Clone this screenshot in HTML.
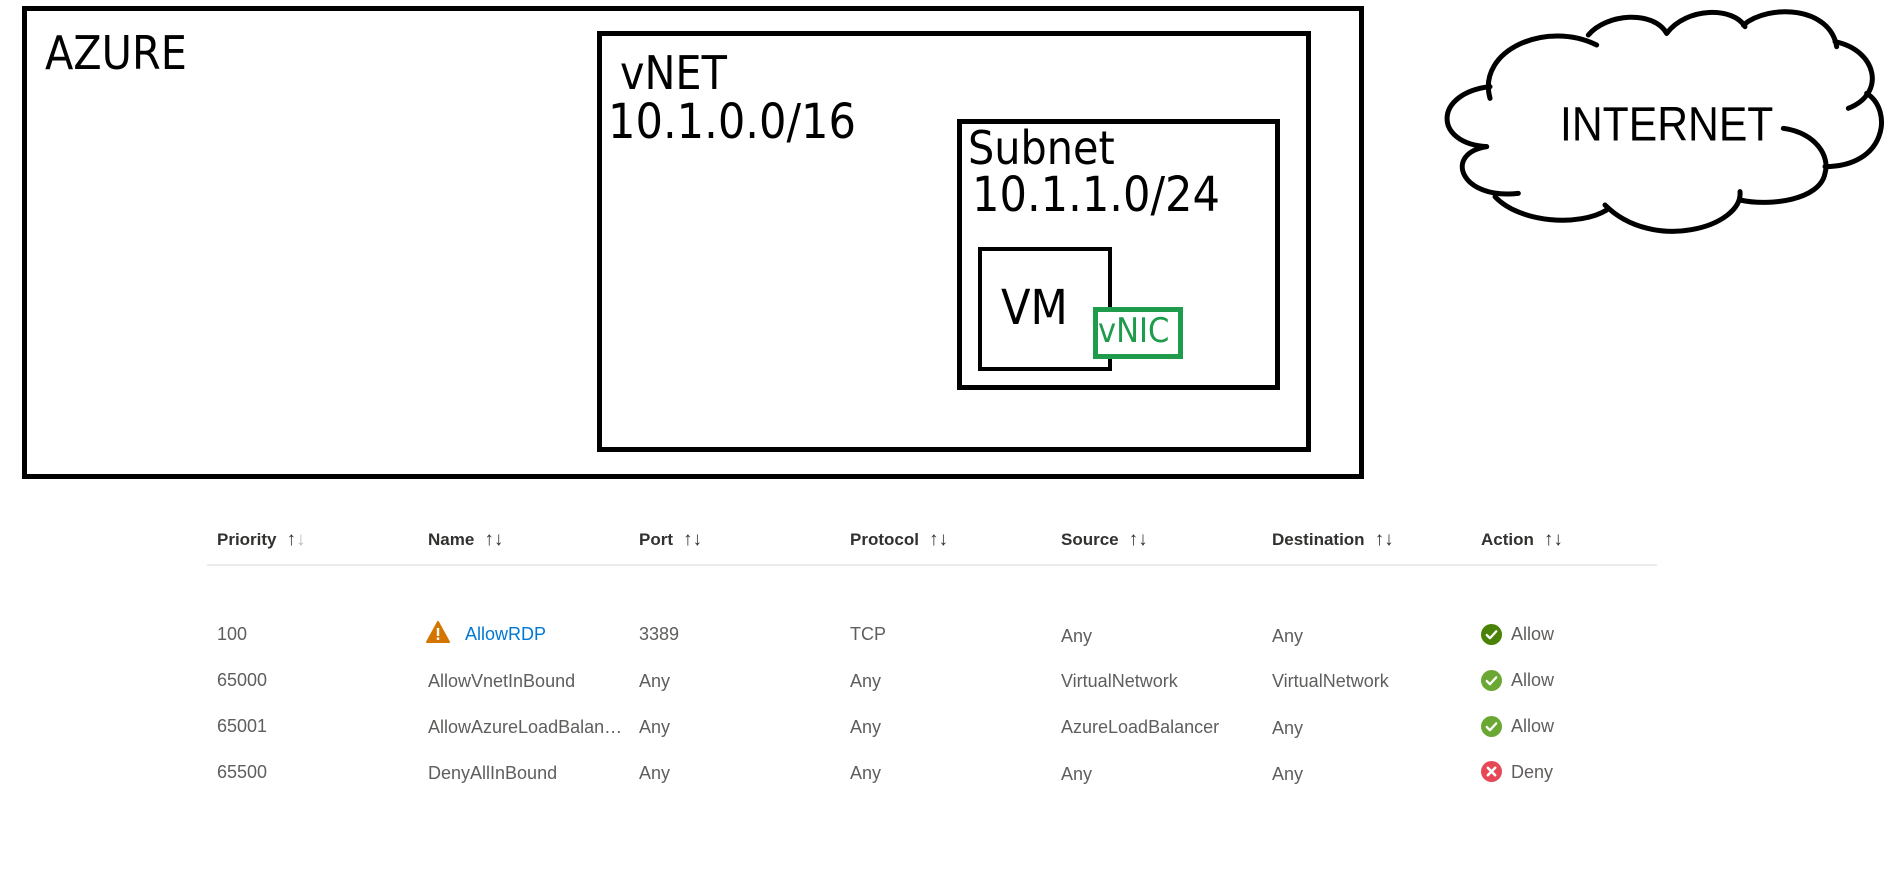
<!DOCTYPE html>
<html><head><meta charset="utf-8"><style>
*{margin:0;padding:0;box-sizing:border-box}
body{width:1890px;height:891px;background:#fff;position:relative;overflow:hidden;font-family:"Liberation Sans",sans-serif}
.b{position:absolute;border:5px solid #000}
.t{position:absolute;color:#000;white-space:nowrap;line-height:1;font-family:"DejaVu Sans Condensed","Liberation Sans",sans-serif}
.h{position:absolute;top:529px;font-size:17px;font-weight:bold;color:#323130;white-space:nowrap}
.h span{font-weight:normal;margin-left:10px;font-size:19px}
.c{position:absolute;font-size:18px;color:#605e5c;white-space:nowrap}
</style></head><body>
<div class="b" style="left:22px;top:6px;width:1342px;height:473px"></div>
<div class="t" style="left:45px;top:30px;font-size:46px">AZURE</div>
<div class="b" style="left:597px;top:31px;width:714px;height:421px"></div>
<div class="t" style="left:620px;top:50px;font-size:46px">vNET</div>
<div class="t" style="left:608px;top:98px;font-size:48px">10.1.0.0/16</div>
<div class="b" style="left:957px;top:119px;width:323px;height:271px"></div>
<div class="t" style="left:968px;top:125px;font-size:46px">Subnet</div>
<div class="t" style="left:972px;top:171px;font-size:48px">10.1.1.0/24</div>
<div class="b" style="left:978px;top:247px;width:134px;height:124px;border-width:4px"></div>
<div class="t" style="left:1001px;top:284px;font-size:48px">VM</div>
<div style="position:absolute;left:1093px;top:307px;width:90px;height:52px;border:5px solid #1e9b4b;background:#fff"></div>
<div class="t" style="left:1098px;top:314px;font-size:34px;color:#1e9b4b">vNIC</div>
<svg style="position:absolute;left:1420px;top:0" width="470" height="340" viewBox="0 0 1410 1020">
<g fill="none" stroke="#000" stroke-width="15" stroke-linecap="round">
<path d="M210,295 C170,150 380,60 530,135"/>
<path d="M505,105 C560,40 700,30 740,100"/>
<path d="M740,100 C800,20 940,20 975,80"/>
<path d="M970,75 C1050,10 1230,20 1250,140"/>
<path d="M1245,125 C1370,150 1400,280 1285,325"/>
<path d="M1340,280 C1420,330 1400,500 1215,500"/>
<path d="M1090,385 C1190,400 1230,470 1215,520 C1200,600 1050,620 960,600"/>
<path d="M960,575 C970,680 700,760 555,615"/>
<path d="M560,630 C480,680 300,670 225,590"/>
<path d="M295,580 C120,600 70,460 200,440"/>
<path d="M200,440 C40,430 40,280 210,260"/>
</g>
<text x="420" y="422" font-family="Liberation Sans,sans-serif" font-size="146" textLength="640" lengthAdjust="spacingAndGlyphs" fill="#000">INTERNET</text>
</svg>
<div class="h" style="left:217px">Priority<span>↑<span style="color:#bbb;margin:0">↓</span></span></div>
<div class="h" style="left:428px">Name<span>↑↓</span></div>
<div class="h" style="left:639px">Port<span>↑↓</span></div>
<div class="h" style="left:850px">Protocol<span>↑↓</span></div>
<div class="h" style="left:1061px">Source<span>↑↓</span></div>
<div class="h" style="left:1272px">Destination<span>↑↓</span></div>
<div class="h" style="left:1481px">Action<span>↑↓</span></div>
<div style="position:absolute;left:207px;top:564px;width:1450px;height:2px;background:#edebe9"></div>

<div class="c" style="left:217px;top:624px">100</div>
<svg style="position:absolute;left:426px;top:621px" width="24" height="22" viewBox="0 0 24 22"><path d="M12 1 L23 21 L1 21 Z" fill="#d47500" stroke="#d47500" stroke-linejoin="round" stroke-width="2"/><rect x="10.8" y="7" width="2.4" height="8" fill="#fff"/><rect x="10.8" y="16.5" width="2.4" height="2.4" fill="#fff"/></svg>
<div class="c" style="left:465px;top:624px;color:#0078d4">AllowRDP</div>
<div class="c" style="left:639px;top:624px">3389</div>
<div class="c" style="left:850px;top:624px">TCP</div>
<div class="c" style="left:1061px;top:626px">Any</div>
<div class="c" style="left:1272px;top:626px">Any</div>

<div class="c" style="left:217px;top:670px">65000</div>
<div class="c" style="left:428px;top:671px">AllowVnetInBound</div>
<div class="c" style="left:639px;top:671px">Any</div>
<div class="c" style="left:850px;top:671px">Any</div>
<div class="c" style="left:1061px;top:671px">VirtualNetwork</div>
<div class="c" style="left:1272px;top:671px">VirtualNetwork</div>

<div class="c" style="left:217px;top:716px">65001</div>
<div class="c" style="left:428px;top:717px;width:192px;overflow:hidden">AllowAzureLoadBalan…</div>
<div class="c" style="left:639px;top:717px">Any</div>
<div class="c" style="left:850px;top:717px">Any</div>
<div class="c" style="left:1061px;top:717px">AzureLoadBalancer</div>
<div class="c" style="left:1272px;top:718px">Any</div>

<div class="c" style="left:217px;top:762px">65500</div>
<div class="c" style="left:428px;top:763px">DenyAllInBound</div>
<div class="c" style="left:639px;top:763px">Any</div>
<div class="c" style="left:850px;top:763px">Any</div>
<div class="c" style="left:1061px;top:764px">Any</div>
<div class="c" style="left:1272px;top:764px">Any</div>

<svg style="position:absolute;left:1481px;top:624px" width="21" height="21" viewBox="0 0 20 20"><circle cx="10" cy="10" r="10" fill="#498205"/><path d="M5.5 10.5 L8.5 13.5 L14.5 7" stroke="#fff" stroke-width="2.2" fill="none" stroke-linecap="round" stroke-linejoin="round"/></svg>
<div class="c" style="left:1511px;top:624px">Allow</div>
<svg style="position:absolute;left:1481px;top:670px" width="21" height="21" viewBox="0 0 20 20"><circle cx="10" cy="10" r="10" fill="#6ba833"/><path d="M5.5 10.5 L8.5 13.5 L14.5 7" stroke="#fff" stroke-width="2.2" fill="none" stroke-linecap="round" stroke-linejoin="round"/></svg>
<div class="c" style="left:1511px;top:670px">Allow</div>
<svg style="position:absolute;left:1481px;top:716px" width="21" height="21" viewBox="0 0 20 20"><circle cx="10" cy="10" r="10" fill="#6ba833"/><path d="M5.5 10.5 L8.5 13.5 L14.5 7" stroke="#fff" stroke-width="2.2" fill="none" stroke-linecap="round" stroke-linejoin="round"/></svg>
<div class="c" style="left:1511px;top:716px">Allow</div>
<svg style="position:absolute;left:1481px;top:761px" width="21" height="21" viewBox="0 0 20 20"><circle cx="10" cy="10" r="10" fill="#e74856"/><path d="M6.5 6.5 L13.5 13.5 M13.5 6.5 L6.5 13.5" stroke="#fff" stroke-width="2.4" stroke-linecap="round"/></svg>
<div class="c" style="left:1511px;top:762px">Deny</div>
</body></html>
